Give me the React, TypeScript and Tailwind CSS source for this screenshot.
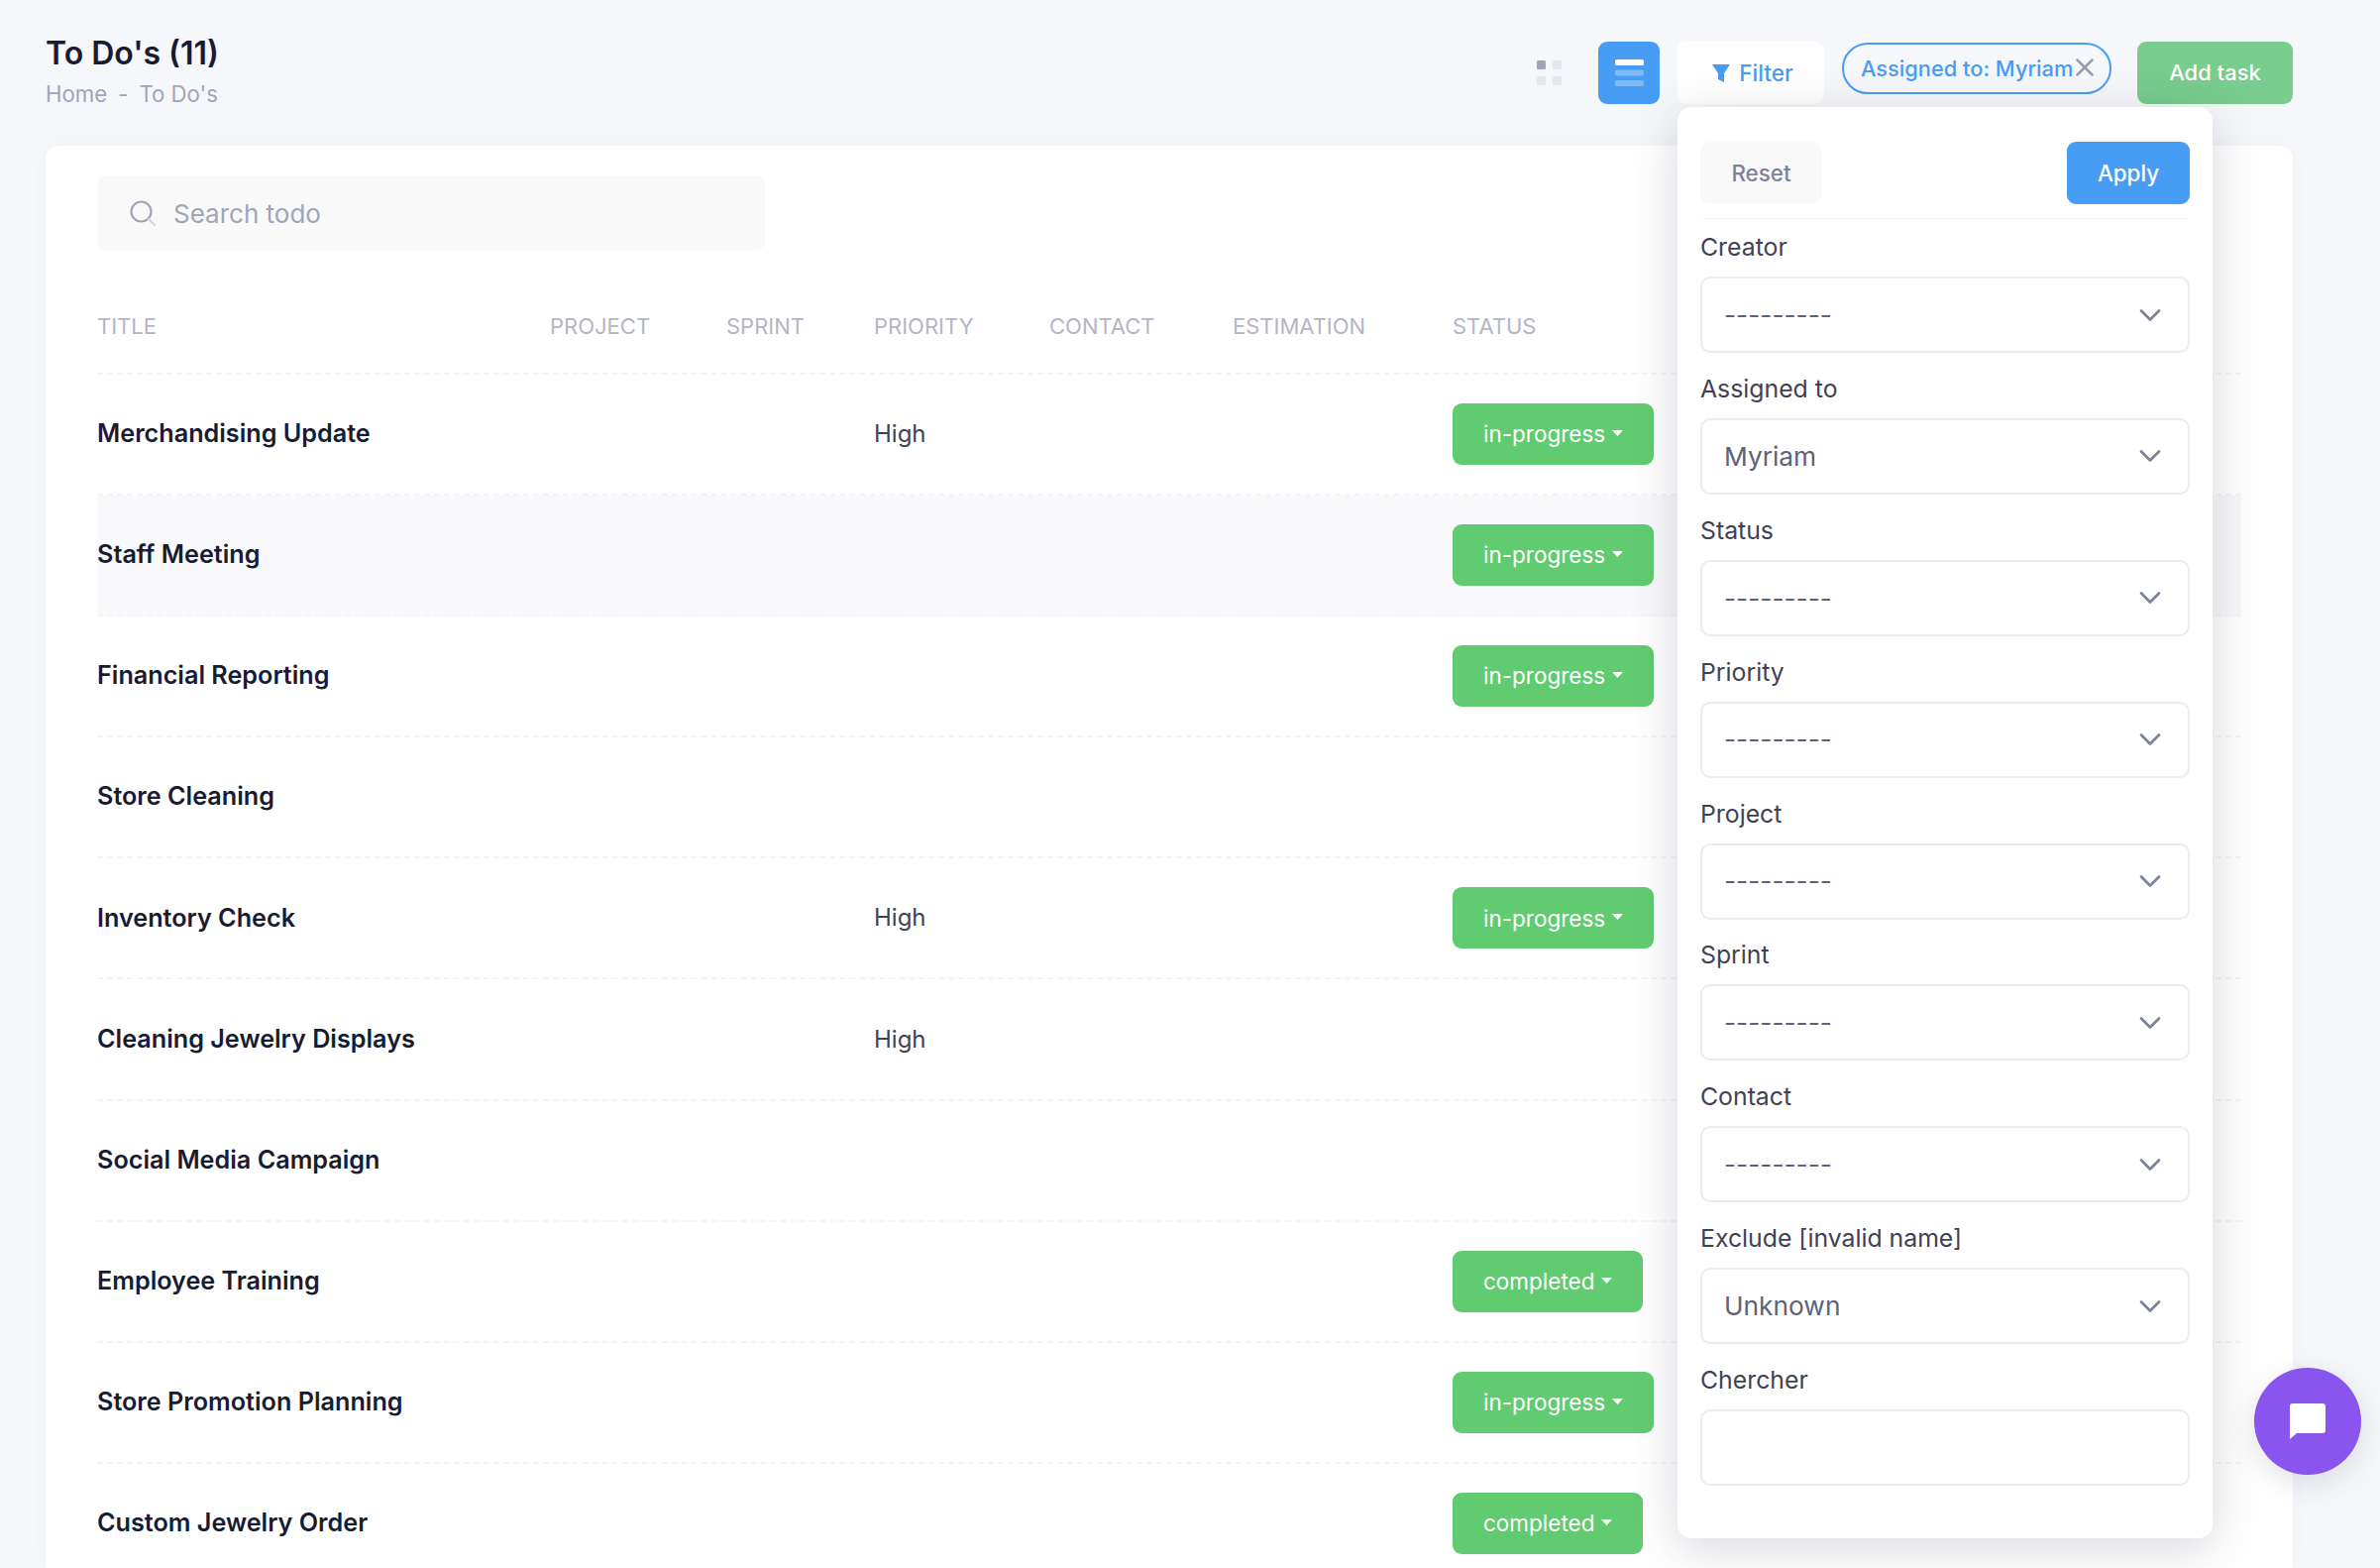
import React from 'react';
import { ChevronDown, X } from 'lucide-react';

interface TodoRow {
  title: string;
  priority?: string;
  status?: string;
  active?: boolean;
}

const rows: TodoRow[] = [
  { title: 'Merchandising Update', priority: 'High', status: 'in-progress' },
  { title: 'Staff Meeting', status: 'in-progress', active: true },
  { title: 'Financial Reporting', status: 'in-progress' },
  { title: 'Store Cleaning' },
  { title: 'Inventory Check', priority: 'High', status: 'in-progress' },
  { title: 'Cleaning Jewelry Displays', priority: 'High' },
  { title: 'Social Media Campaign' },
  { title: 'Employee Training', status: 'completed' },
  { title: 'Store Promotion Planning', status: 'in-progress' },
  { title: 'Custom Jewelry Order', status: 'completed' },
];

const columns = ['Title', 'Project', 'Sprint', 'Priority', 'Contact', 'Estimation', 'Status'];

const filters = [
  { label: 'Creator', value: '---------' },
  { label: 'Assigned to', value: 'Myriam' },
  { label: 'Status', value: '---------' },
  { label: 'Priority', value: '---------' },
  { label: 'Project', value: '---------' },
  { label: 'Sprint', value: '---------' },
  { label: 'Contact', value: '---------' },
  { label: 'Exclude [invalid name]', value: 'Unknown' },
];

function FilterField({ label, value }: { label: string; value?: string }) {
  return (
    <div className="flex h-[142.9px] flex-col">
      <label className="h-[30px] text-[24.8px] leading-[30px] text-[#3f4254]">{label}</label>
      <div className="mt-[15px] flex h-[77px] items-center justify-between rounded-[10px] border-2 border-[#ebecf2] bg-white pl-[22px] pr-[20px] text-[26.3px] text-[#5e6278]">
        <span>{value}</span>
        {value && <ChevronDown className="h-[36px] w-[36px] text-[#7e8299]" strokeWidth={1.8} />}
      </div>
    </div>
  );
}

function FilterPanel() {
  return (
    <div className="absolute left-[1693px] top-[108px] z-10 h-[1444px] w-[540px] rounded-[14px] bg-white px-[23px] pt-[35px] shadow-[0_10px_50px_0_rgba(60,60,90,0.2)]">
      <div className="flex items-center justify-between border-b border-[#f6f6f9] pb-[14px]">
        <button className="h-[63px] w-[123px] rounded-[9px] bg-[#f9f9f9] text-[22.4px] font-medium text-[#7e8299]">
          Reset
        </button>
        <button className="h-[63px] w-[124px] rounded-[9px] bg-[#479cf3] text-[22.4px] font-medium text-white">
          Apply
        </button>
      </div>
      <div className="mt-[13px] flex flex-col">
        {filters.map((f) => (
          <FilterField key={f.label} label={f.label} value={f.value} />
        ))}
        <FilterField label="Chercher" />
      </div>
    </div>
  );
}

function StatusButton({ status }: { status: string }) {
  return (
    <button className="flex h-[62px] w-fit items-center gap-[7px] rounded-[9px] bg-[#61cb71] px-[31px] text-[22.5px] text-white">
      {status}
      <svg viewBox="0 0 11 6" className="mb-[2px] h-[6px] w-[11px]" fill="currentColor">
        <path d="M0 0h11L5.5 6z" />
      </svg>
    </button>
  );
}

function PageHeader() {
  return (
    <header className="flex h-[147px] items-start justify-between pt-[42px]">
      <div>
        <h1 className="text-[32px] font-semibold leading-[24px] text-[#181c32]">To Do's (11)</h1>
        <div className="mt-[16px] flex gap-[11px] text-[22.2px] leading-[26px] text-[#a1a5b7]">
          <span>Home</span>
          <span>-</span>
          <span>To Do's</span>
        </div>
      </div>
      <div className="flex items-start">
        <button className="flex h-[63px] w-[63px] items-center justify-center rounded-[9px]">
          <svg viewBox="0 0 25 25" className="h-[25px] w-[25px]">
            <rect x="0" y="0" width="9" height="9" rx="1.5" fill="#a1a5b7" />
            <rect x="16" y="0" width="9" height="9" rx="1.5" fill="#e4e6ef" />
            <rect x="0" y="16" width="9" height="9" rx="1.5" fill="#e4e6ef" />
            <rect x="16" y="16" width="9" height="9" rx="1.5" fill="#e4e6ef" />
          </svg>
        </button>
        <button className="ml-[18px] flex h-[63px] w-[62px] items-center justify-center rounded-[9px] bg-[#479cf3]">
          <svg viewBox="0 0 29 27" className="h-[27px] w-[29px]" fill="#fff">
            <rect width="29" height="6" rx="1.5" />
            <rect y="10.5" width="29" height="6" rx="1.5" opacity="0.3" />
            <rect y="21" width="29" height="6" rx="1.5" opacity="0.3" />
          </svg>
        </button>
        <button className="ml-[18px] flex h-[63px] w-[148px] items-center justify-center gap-[9px] rounded-[9px] bg-white pl-[4px] text-[22.6px] font-medium text-[#479cf3]">
          <svg viewBox="0 0 18 18" className="h-[18px] w-[18px]" fill="currentColor">
            <path d="M0 0h18l-6 9v9l-6-3V9z" />
          </svg>
          Filter
        </button>
        <div className="ml-[18px] mt-[1px] flex h-[52px] w-[272px] items-center rounded-full border-2 border-[#479cf3] pl-[17px] text-[21.8px] font-medium text-[#479cf3]">
          Assigned to: Myriam
          <X className="-ml-[3px] -mt-[2px] h-[30px] w-[30px] text-[#9a9dae]" strokeWidth={2} />
        </div>
        <button className="ml-[26px] h-[63px] w-[157px] rounded-[9px] bg-[#78cc8d] text-[22px] font-medium text-white">
          Add task
        </button>
      </div>
    </header>
  );
}

function TodoTable() {
  return (
    <section className="h-[1435px] rounded-t-[14px] bg-white px-[52px] pt-[30px] shadow-[0_0_20px_rgba(76,87,125,0.03)]">
      <div className="flex h-[76px] w-[674px] items-center gap-[18px] rounded-[9px] bg-[#f9f9f9] pl-[33px] text-[26px] text-[#a1a5b7]">
        <svg viewBox="0 0 26 26" className="h-[26px] w-[26px]" fill="none">
          <circle cx="11.5" cy="11.5" r="10" stroke="#a1a5b7" strokeWidth="2.2" />
          <path d="M19 19l6 6" stroke="#d5d7e0" strokeWidth="2.2" strokeLinecap="round" />
        </svg>
        Search todo
      </div>
      <div className="mt-[45px] grid h-[80px] grid-cols-[457px_178px_149px_177px_185px_222px_1fr] border-b-2 border-dashed border-[#f3f4f7] pt-[18px] text-[22px] uppercase leading-[26px] text-[#b5b5c3]">
        {columns.map((c) => (
          <div key={c}>{c}</div>
        ))}
      </div>
      {rows.map((r) => (
        <div
          key={r.title}
          className={`grid h-[122.1px] grid-cols-[457px_178px_149px_177px_185px_222px_1fr] items-center border-b-2 border-dashed border-[#f3f4f7] ${r.active ? 'bg-[#f9f9fb]' : ''}`}
        >
          <div className="text-[25.2px] font-semibold text-[#181c32]">{r.title}</div>
          <div />
          <div />
          <div className="text-[24px] text-[#3f4254]">{r.priority}</div>
          <div />
          <div />
          <div>{r.status && <StatusButton status={r.status} />}</div>
        </div>
      ))}
    </section>
  );
}

export default function App() {
  return (
    <div className="relative h-[1582px] w-[2402px] overflow-hidden bg-[#f5f7fa] pl-[46px] pr-[88px] font-['Inter',sans-serif]">
      <PageHeader />
      <TodoTable />
      <FilterPanel />
      <button className="absolute left-[2275px] top-[1380px] z-20 flex h-[108px] w-[108px] items-center justify-center rounded-full bg-[#8a55ee] shadow-[0_8px_30px_rgba(60,60,90,0.15)]">
        <svg viewBox="0 0 36 36" className="h-[36px] w-[36px]" fill="#fff">
          <path d="M3 0h30a3 3 0 0 1 3 3v24a3 3 0 0 1-3 3H7l-7 6V3a3 3 0 0 1 3-3z" />
        </svg>
      </button>
    </div>
  );
}
